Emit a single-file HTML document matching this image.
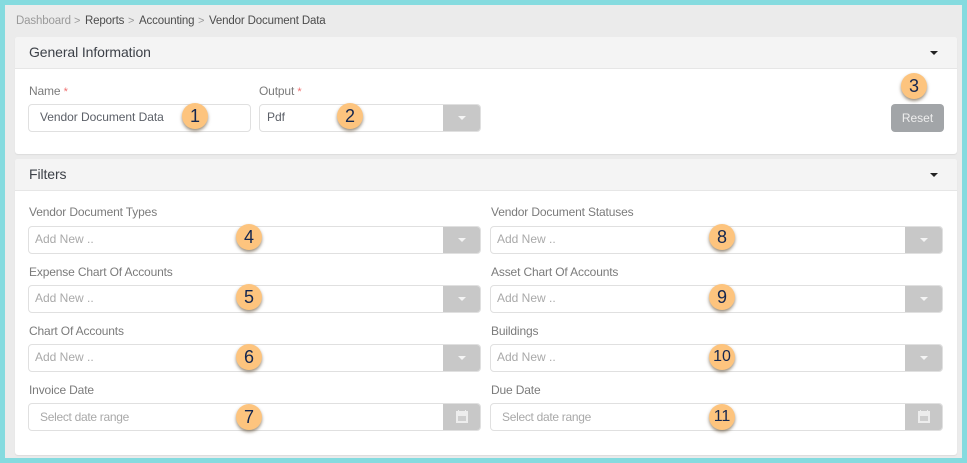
<!DOCTYPE html>
<html><head><meta charset="utf-8"><style>
*{box-sizing:border-box}
html,body{margin:0;padding:0}
body{width:967px;height:463px;position:relative;overflow:hidden;background:#ebebeb;font-family:"Liberation Sans",sans-serif;filter:blur(.3px)}
.abs,.t,.inp,.btn,.b,.car,.panel,.hd,.lb{position:absolute}
.frame{position:absolute;left:0;top:0;width:967px;height:463px;border:solid #85dbdf;border-width:5px 5px 5px 5px;z-index:5;pointer-events:none}
.panel{background:#fff;left:15px;width:942px;border-radius:3px;box-shadow:0 1px 1px #dcdcdc}
.hd{left:15px;width:942px;height:32px;background:#f4f4f4;border-bottom:1px solid #e6e6e6;border-radius:3px 3px 0 0;font-size:14px;letter-spacing:-.1px;color:#3d4148;line-height:31px;padding-left:14px}
.lb{font-size:12px;letter-spacing:-.15px;color:#7b7b7b;white-space:nowrap;line-height:14px}
.lb i{color:#ef7070;font-style:normal;font-size:11px}
.cr{font-size:11.5px;letter-spacing:-.15px}
.inp{height:28px;background:#fff;border:1px solid #e0e0e0;border-radius:4px;font-size:12px;color:#a9a9a9;line-height:25px;white-space:nowrap;overflow:hidden}
.btn{right:-1px;top:-1px;width:38px;height:28px;background:#c8c8c8}
.btn:after{content:"";position:absolute;left:15px;top:12px;border:4px solid transparent;border-top:4px solid #f4f4f4;border-bottom:0}
.cal:after{display:none}
.cal svg{position:absolute;left:13px;top:7px}
.dr{letter-spacing:-.3px;line-height:26px}
.car{width:0;height:0;border:4px solid transparent;border-top:4px solid #222;border-bottom:0}
.b{width:26px;height:26px;border-radius:50%;background:#fdc47e;box-shadow:0 2px 3px rgba(70,50,20,.55);font-size:18px;line-height:26px;text-align:center;color:#14264f;z-index:3}
.b.s{font-size:16px}
</style></head><body>
<div class="frame"></div>
<div class="lb cr" style="left:16px;top:14px;color:#9a9a9a">Dashboard</div>
<div class="lb" style="left:74px;top:14px;color:#999;font-size:11px">&gt;</div>
<div class="lb cr" style="left:85px;top:14px;color:#4c4c4c">Reports</div>
<div class="lb" style="left:128px;top:14px;color:#999;font-size:11px">&gt;</div>
<div class="lb cr" style="left:139px;top:14px;color:#4c4c4c">Accounting</div>
<div class="lb" style="left:198px;top:14px;color:#999;font-size:11px">&gt;</div>
<div class="lb cr" style="left:209px;top:14px;color:#4c4c4c">Vendor Document Data</div>

<div class="panel" style="top:37px;height:117px"></div>
<div class="hd" style="top:37px">General Information</div>
<div class="car" style="left:930px;top:51px"></div>
<div class="lb" style="left:29px;top:84px">Name <i>*</i></div>
<div class="inp" style="left:28px;top:104px;width:223px;color:#5c6068;padding-left:11px;font-size:12px;letter-spacing:-.05px">Vendor Document Data</div>
<div class="lb" style="left:259px;top:84px">Output <i>*</i></div>
<div class="inp" style="left:259px;top:104px;width:222px;color:#5c6068;padding-left:7px">Pdf<div class="btn" style="width:38px"></div></div>
<div class="abs" style="left:891px;top:104px;width:53px;height:28px;background:#a2a5a8;border-radius:4px;color:#eee;font-size:12px;line-height:28px;text-align:center">Reset</div>

<div class="panel" style="top:159px;height:296px"></div>
<div class="hd" style="top:159px">Filters</div>
<div class="car" style="left:930px;top:173px"></div>

<div class="lb" style="left:29px;top:205px">Vendor Document Types</div>
<div class="inp" style="left:28px;top:226px;width:453px;padding-left:6px">Add New ..<div class="btn"></div></div>
<div class="lb" style="left:29px;top:265px">Expense Chart Of Accounts</div>
<div class="inp" style="left:28px;top:285px;width:453px;padding-left:6px">Add New ..<div class="btn"></div></div>
<div class="lb" style="left:29px;top:324px">Chart Of Accounts</div>
<div class="inp" style="left:28px;top:344px;width:453px;padding-left:6px">Add New ..<div class="btn"></div></div>
<div class="lb" style="left:29px;top:383px">Invoice Date</div>
<div class="inp dr" style="left:28px;top:403px;width:453px;padding-left:11px">Select date range<div class="btn cal"><svg width="12" height="13" viewBox="0 0 12 13"><rect x="0" y="1" width="12" height="12" fill="#ededed"/><rect x="2" y="6" width="8" height="5" fill="#cfcfcf"/><rect x="2" y="0" width="1" height="3" fill="#ededed"/><rect x="9" y="0" width="1" height="3" fill="#ededed"/></svg></div></div>

<div class="lb" style="left:491px;top:205px">Vendor Document Statuses</div>
<div class="inp" style="left:490px;top:226px;width:453px;padding-left:6px">Add New ..<div class="btn"></div></div>
<div class="lb" style="left:491px;top:265px">Asset Chart Of Accounts</div>
<div class="inp" style="left:490px;top:285px;width:453px;padding-left:6px">Add New ..<div class="btn"></div></div>
<div class="lb" style="left:491px;top:324px">Buildings</div>
<div class="inp" style="left:490px;top:344px;width:453px;padding-left:6px">Add New ..<div class="btn"></div></div>
<div class="lb" style="left:491px;top:383px">Due Date</div>
<div class="inp dr" style="left:490px;top:403px;width:453px;padding-left:11px">Select date range<div class="btn cal"><svg width="12" height="13" viewBox="0 0 12 13"><rect x="0" y="1" width="12" height="12" fill="#ededed"/><rect x="2" y="6" width="8" height="5" fill="#cfcfcf"/><rect x="2" y="0" width="1" height="3" fill="#ededed"/><rect x="9" y="0" width="1" height="3" fill="#ededed"/></svg></div></div>

<div class="b" style="left:182px;top:103px">1</div>
<div class="b" style="left:337px;top:103px">2</div>
<div class="b" style="left:901px;top:73px">3</div>
<div class="b" style="left:236px;top:224px">4</div>
<div class="b" style="left:236px;top:284px">5</div>
<div class="b" style="left:236px;top:344px">6</div>
<div class="b" style="left:236px;top:404px">7</div>
<div class="b" style="left:709px;top:224px">8</div>
<div class="b" style="left:709px;top:284px">9</div>
<div class="b s" style="left:709px;top:344px">10</div>
<div class="b s" style="left:709px;top:404px">11</div>
</body></html>
